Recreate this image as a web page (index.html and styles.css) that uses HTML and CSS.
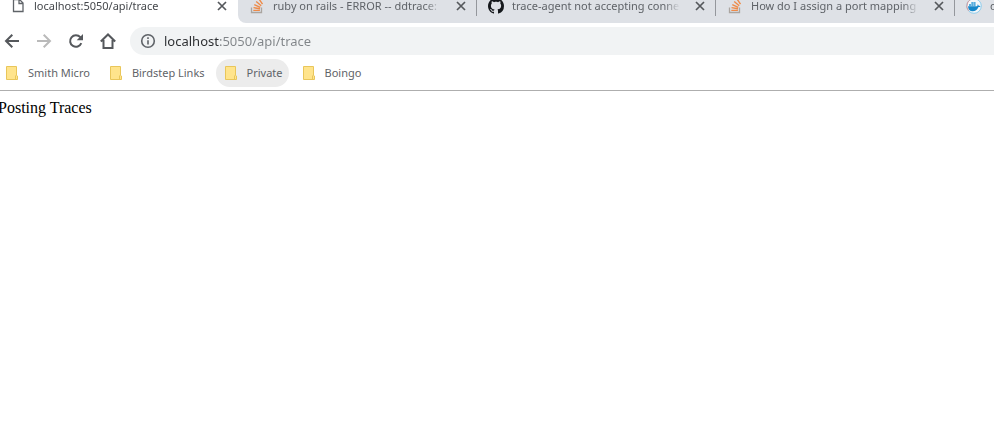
FILE: index.html
```html
<!DOCTYPE html>
<html lang="en">
<head>
<meta charset="utf-8">
<title>localhost:5050/api/trace</title>
<link rel="stylesheet" href="styles.css">
</head>
<body>
<svg class="defs" aria-hidden="true">
  <symbol id="close" viewBox="0 0 16 16"><path d="M4 4l8 8M12 4l-8 8" fill="none" stroke="#55585c" stroke-width="1.7"/></symbol>
  <symbol id="stack" viewBox="0 0 16 16">
    <path d="M2.5 9.5v5h10v-5" fill="none" stroke="#aaa5a0" stroke-width="1.3"/>
    <path d="M4.3 12.4h6.6M4.5 9.6l6.5 1.2M5.3 6.6l6 2.7M7.2 3.5l5 4.2M10 1l3.5 5.2" fill="none" stroke="#ee8a48" stroke-width="1.4"/>
  </symbol>
  <symbol id="folder" viewBox="0 0 14 16">
    <path d="M1.5 1.5h10v8.700l1 .8v3.500h-11z" fill="#ffe48c" stroke="#e9c65a"/>
    <path d="M10.500 14.500v-3.500l1-1" fill="none" stroke="#e9c65a"/>
  </symbol>
</svg>
<header class="browser">
  <nav class="tabs" aria-label="Tabs">
    <div class="tab active">
      <svg class="favicon" viewBox="0 0 16 16" aria-hidden="true"><path d="M3.500 1.500h6l3.500 3.500v8.500h-9.500zM9 1.500v4h4" fill="#fff" stroke="#5f6368" stroke-width="1.300"/></svg>
      <a class="title" href="#">localhost:5050/api/trace</a>
      <button class="close" aria-label="Close tab"><svg viewBox="0 0 16 16"><use href="#close"/></svg></button>
    </div>
    <div class="tab">
      <svg class="favicon" aria-hidden="true"><use href="#stack"/></svg>
      <a class="title" href="#">ruby on rails - ERROR -- ddtrace:</a>
      <button class="close" aria-label="Close tab"><svg viewBox="0 0 16 16"><use href="#close"/></svg></button>
    </div>
    <div class="tab">
      <svg class="favicon" viewBox="0 0 16 16" aria-hidden="true"><path fill="#15181c" d="M8 0C3.580 0 0 3.580 0 8c0 3.540 2.290 6.530 5.470 7.590.4.070.55-.17.55-.38 0-.19-.01-.82-.01-1.490-2.010.37-2.530-.49-2.690-.94-.09-.23-.48-.94-.82-1.130-.28-.15-.68-.52-.01-.53.63-.01 1.080.58 1.230.82.72 1.210 1.870.87 2.330.66.07-.52.28-.87.51-1.070-1.780-.2-3.640-.89-3.640-3.950 0-.87.31-1.590.82-2.150-.08-.2-.36-1.020.08-2.120 0 0 .67-.21 2.200.82.640-.18 1.320-.27 2-.27s1.360.09 2 .27c1.530-1.040 2.200-.82 2.200-.82.440 1.100.160 1.920.080 2.120.510.560.820 1.270.820 2.150 0 3.070-1.870 3.750-3.650 3.950.290.250.540.730.540 1.480 0 1.070-.01 1.930-.01 2.200 0 .210.150.460.550.380A8.010 8.010 0 0 0 16 8c0-4.420-3.580-8-8-8z"/></svg>
      <a class="title" href="#">trace-agent not accepting connec</a>
      <button class="close" aria-label="Close tab"><svg viewBox="0 0 16 16"><use href="#close"/></svg></button>
    </div>
    <div class="tab">
      <svg class="favicon" aria-hidden="true"><use href="#stack"/></svg>
      <a class="title" href="#">How do I assign a port mapping</a>
      <button class="close" aria-label="Close tab"><svg viewBox="0 0 16 16"><use href="#close"/></svg></button>
    </div>
    <div class="tab">
      <svg class="favicon" viewBox="0 0 16 16" aria-hidden="true">
        <circle cx="8" cy="8" r="7.300" fill="#f5f7f9" stroke="#8fcdec"/>
        <path d="M8 .7A7.300 7.300 0 0 0 2.500 12.700" fill="none" stroke="#d99a9a"/>
        <path d="M2 8.200h8.700c.8 0 1-.8.700-1.800 1 .2 1.300.9 1.300 1.500.7-.2 1.500 0 1.800.4-.6.800-1.400.9-2.200.9-1 2.600-3 4-5.700 4C3.800 13.200 2.200 11.500 2 8.200z" fill="#1687c9"/>
        <path d="M3 6.200h2v1.500H3zM5.300 6.200h2v1.500h-2zM7.600 6.200h2v1.500h-2zM5.300 4.300h2v1.500h-2zM7.600 4.300h2v1.500h-2z" fill="#2496d6"/>
      </svg>
      <a class="title" href="#">d</a>
      <button class="close" aria-label="Close tab"><svg viewBox="0 0 16 16"><use href="#close"/></svg></button>
    </div>
  </nav>
  <div class="toolbar">
    <button class="tool" aria-label="Back"><svg viewBox="0 0 16 16"><path d="M15 8H2.500M8.300 1.700L2 8l6.300 6.300"/></svg></button>
    <button class="tool" aria-label="Forward" disabled><svg viewBox="0 0 16 16"><path d="M1 8h12.500M7.700 1.700L14 8l-6.300 6.300"/></svg></button>
    <button class="tool" aria-label="Reload"><svg viewBox="0 0 16 16"><path d="M13.300 10.200A5.800 5.800 0 1 1 12.300 4.200l1 1"/><path class="solid" d="M15 1v6.300H8.700z"/></svg></button>
    <button class="tool" aria-label="Home"><svg viewBox="0 0 16 16"><path d="M.8 8.500L8 1.500l7.200 7M3.500 7v8h9V7"/></svg></button>
    <form class="address">
      <svg class="info" viewBox="0 0 16 16" aria-hidden="true"><circle cx="8" cy="8" r="6.300"/><path d="M8 7.200v4.300M8 4.300v1.600"/></svg>
      <input class="url" aria-label="Address" value="localhost:5050/api/trace" spellcheck="false">
    </form>
  </div>
  <nav class="bookmarks" aria-label="Bookmarks">
    <button class="bookmark"><svg viewBox="0 0 14 16"><use href="#folder"/></svg>Smith Micro</button>
    <button class="bookmark"><svg viewBox="0 0 14 16"><use href="#folder"/></svg>Birdstep Links</button>
    <button class="bookmark hovered"><svg viewBox="0 0 14 16"><use href="#folder"/></svg>Private</button>
    <button class="bookmark"><svg viewBox="0 0 14 16"><use href="#folder"/></svg>Boingo</button>
  </nav>
</header>
<main class="page">Posting Traces</main>
</body>
</html>
```
FILE: styles.css
```css
* { box-sizing: border-box; }
body {
  margin: 0;
  background: #fff;
  overflow-x: hidden;
}
button {
  border: 0;
  padding: 0;
  background: none;
  font: inherit;
  color: inherit;
}
.defs { display: none; }
.browser {
  border-bottom: 1px solid #aeaeae;
  font: 11px/16px "Noto Sans", "Open Sans", sans-serif;
  color: #5f6368;
}
.tabs {
  display: flex;
  overflow: hidden;
  height: 23px;
  background: #fff;
  line-height: 14px;
}
.tab {
  display: flex;
  flex: none;
  width: 239px;
  align-items: center;
  gap: 8px;
  padding: 0 7px 11px 11px;
  background: #dee1e6;
  border-right: 1px solid #94979c;
  border-image: linear-gradient(#94979c 16px, #dee1e6 16px) 1;
}
.tab.active {
  width: 238px;
  padding-left: 10px;
  background: #fff;
  border-image: none;
  border-color: transparent;
}
.active + .tab { border-bottom-left-radius: 8px; }
.favicon {
  flex: none;
  width: 16px;
  height: 16px;
}
.title {
  flex: 1;
  min-width: 0;
  overflow: hidden;
  white-space: nowrap;
  color: inherit;
  text-decoration: none;
  mask-image: linear-gradient(to left, transparent 4px, #000 20px);
}
.active .title { color: #45484c; }
.close, .close svg {
  display: block;
  flex: none;
  width: 16px;
  height: 16px;
}
.toolbar {
  display: flex;
  align-items: center;
  gap: 16px;
  padding: 4px 0 4px 4px;
}
.tool, .tool svg {
  display: block;
  width: 16px;
  height: 16px;
}
.tool path {
  fill: none;
  stroke: #55585c;
  stroke-width: 2;
}
.tool .solid { fill: #55585c; stroke: none; }
.tool:disabled path { stroke: #bababa; }
.address {
  display: flex;
  flex: 1;
  align-items: center;
  gap: 8px;
  height: 28px;
  margin-left: -2px;
  padding-left: 10px;
  background: #f1f3f4;
  border-radius: 14px 0 0 14px;
}
.info {
  width: 16px;
  height: 16px;
  fill: none;
  stroke: #5f6368;
  stroke-width: 1.6;
}
.url {
  flex: 1;
  border: 0;
  padding: 0;
  outline: 0;
  font: 13px/20px "Noto Sans", "Open Sans", sans-serif;
  background: linear-gradient(to right, #2b2d30 55px, #808488 55px) text;
  -webkit-text-fill-color: transparent;
}
.bookmarks {
  display: flex;
  gap: 5px;
  margin-left: -3px;
  padding-bottom: 3px;
}
.bookmark {
  display: flex;
  align-items: center;
  gap: 9px;
  height: 28px;
  padding: 0 6px 0 8px;
  border-radius: 14px;
}
.bookmark svg { width: 14px; height: 16px; }
.hovered { background: #ececec; }
.page {
  padding-top: 8px;
  margin-left: -2px;
  font: 16px/18px "Liberation Serif", serif;
  color: #000;
}
```
